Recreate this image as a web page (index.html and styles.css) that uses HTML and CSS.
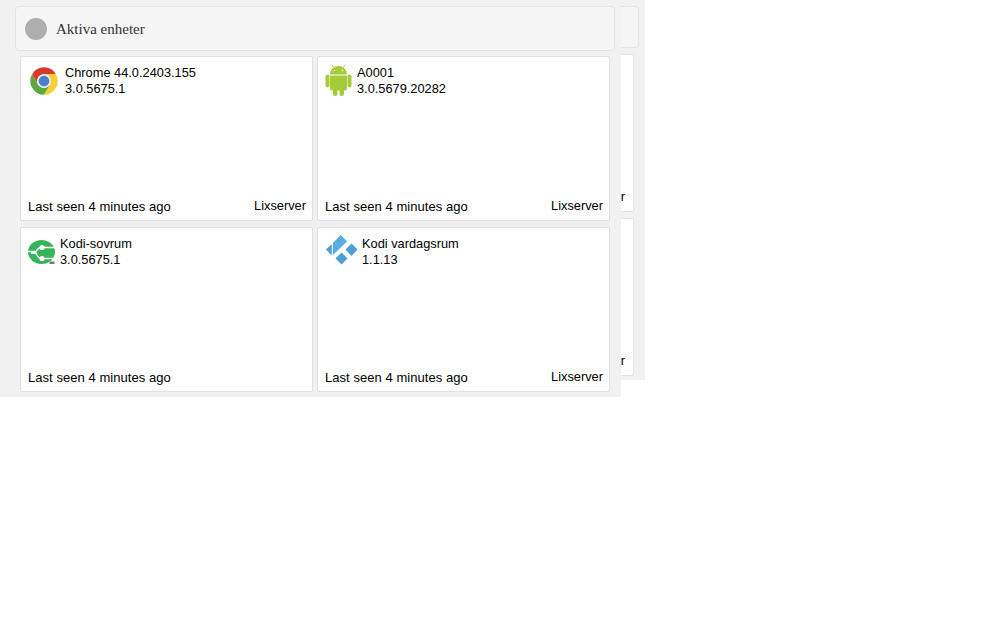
FILE: index.html
```html
<!DOCTYPE html>
<html lang="sv">
<head>
  <meta charset="UTF-8" />
  <title>Aktiva enheter</title>
  <link rel="stylesheet" href="styles.css">
</head>
<body>

  <!-- panel lying behind the front one -->
  <div class="panel-back">
    <div class="head-back"></div>
    <div class="grid-back">
      <div class="card-back"><span class="cut">r</span></div>
      <div class="card-back"><span class="cut">r</span></div>
    </div>
  </div>

  <div class="panel">
    <div class="head">
      <span class="head-dot"></span>
      <span class="head-title">Aktiva enheter</span>
    </div>

    <div class="grid">
      <div class="card">
        <div class="card-top">
          <svg class="icon icon-chrome" viewBox="0 0 48 48">
            <path fill="#d9382c" d="M4.95 13A22 22 0 0 1 43.05 13H24A11 11 0 0 0 14.5 29.5Z"/>
            <path fill="#f5cf33" d="M43.05 13A22 22 0 0 1 24 46L33.5 29.5A11 11 0 0 0 24 13Z"/>
            <path fill="#5aa83f" d="M24 46A22 22 0 0 1 4.95 13L14.5 29.5A11 11 0 0 0 33.5 29.5Z"/>
            <circle cx="24" cy="24" r="11" fill="#e8e8e8"/>
            <circle cx="24" cy="24" r="8.5" fill="#4a7fc9"/>
          </svg>
          <div class="info">
            <div>Chrome 44.0.2403.155</div>
            <div>3.0.5675.1</div>
          </div>
        </div>
        <div class="card-foot">
          <span class="seen">Last seen 4 minutes ago</span>
          <span class="server">Lixserver</span>
        </div>
      </div>

      <div class="card">
        <div class="card-top">
          <svg class="icon icon-android" viewBox="0 0 28 32">
            <g fill="#a4cb39">
              <path d="M5 10.5a8.5 8.5 0 0 1 17 0Z"/>
              <path d="M5 11.5h17v13a2 2 0 0 1-2 2H7a2 2 0 0 1-2-2Z"/>
              <rect x="0.5" y="10.5" width="4" height="13" rx="2"/>
              <rect x="22.5" y="10.5" width="4" height="13" rx="2"/>
              <rect x="8" y="22" width="4.5" height="10" rx="2.2"/>
              <rect x="14.5" y="22" width="4.5" height="10" rx="2.2"/>
            </g>
            <path d="M8.5 3.5L7 0.5M18.5 3.5L20 0.5" stroke="#a4cb39" stroke-width="0.8"/>
            <circle cx="9.5" cy="6.5" r="0.8" fill="#fff"/>
            <circle cx="17.5" cy="6.5" r="0.8" fill="#fff"/>
          </svg>
          <div class="info">
            <div>A0001</div>
            <div>3.0.5679.20282</div>
          </div>
        </div>
        <div class="card-foot">
          <span class="seen">Last seen 4 minutes ago</span>
          <span class="server">Lixserver</span>
        </div>
      </div>

      <div class="card">
        <div class="card-top">
          <svg class="icon icon-sync" viewBox="0 0 27 24">
            <ellipse cx="13.5" cy="12" rx="13.5" ry="12" fill="#36b558"/>
            <path d="M27 7.5H14Q10 7.5 8 11.5H0M27 18.5H14Q10 18.5 8 13H3" fill="none" stroke="#fff" stroke-width="1.5"/>
            <circle cx="14" cy="7.5" r="2.6" fill="#fff"/>
            <circle cx="14" cy="18.5" r="2.6" fill="#fff"/>
            <rect x="21.5" y="21.5" width="5" height="2.5" fill="#777"/>
          </svg>
          <div class="info">
            <div>Kodi-sovrum</div>
            <div>3.0.5675.1</div>
          </div>
        </div>
        <div class="card-foot">
          <span class="seen">Last seen 4 minutes ago</span>
        </div>
      </div>

      <div class="card">
        <div class="card-top">
          <svg class="icon icon-kodi" viewBox="0 0 32 30">
            <path fill="#58ade0" d="M15.7 0L22 6.5L8 20V8Z"/>
            <path fill="#4b9fd2" d="M1 14.5L6.8 9V20.5Z"/>
            <path fill="#4b9fd2" d="M26.5 8.5L32.5 14.5L26.5 21L20.5 14.5Z"/>
            <path fill="#4b9fd2" d="M16.5 17.5L22.5 23.5L16.5 29.5L10.5 23.5Z"/>
          </svg>
          <div class="info">
            <div>Kodi vardagsrum</div>
            <div>1.1.13</div>
          </div>
        </div>
        <div class="card-foot">
          <span class="seen">Last seen 4 minutes ago</span>
          <span class="server">Lixserver</span>
        </div>
      </div>
    </div>
  </div>

</body>
</html>
```

FILE: styles.css
```css
body {
  margin: 0;
  background: #fff;
  font-family: "Liberation Sans", Arial, sans-serif;
  font-size: 12.8px;
  color: #000;
}

/* back panel, sticks out on the right of the front one */
.panel-back {
  position: absolute;
  top: 0;
  left: 0;
  width: 645px;
  height: 380px;
  box-sizing: border-box;
  padding: 6px 6px 0 0;
  background: #f1f1f1;
}
.head-back {
  height: 42px;
  box-sizing: border-box;
  margin-left: 200px;
  background: #f5f5f5;
  border: 1px solid #e3e3e3;
  border-radius: 4px;
}
.grid-back {
  display: flex;
  flex-direction: column;
  gap: 6px;
  margin: 6px 5px 0 200px;
}
.card-back {
  height: 158px;
  box-sizing: border-box;
  background: #fff;
  border: 1px solid #e3e3e3;
  border-radius: 2px;
  display: flex;
  justify-content: flex-end;
  align-items: flex-end;
  padding: 0 8px 7px 0;
}

.panel {
  position: relative;
  width: 621px;
  height: 397px;
  box-sizing: border-box;
  padding: 6px 6px 0 15px;
  background: #f1f1f1;
}
.head {
  height: 45px;
  box-sizing: border-box;
  display: flex;
  align-items: center;
  gap: 9px;
  padding-left: 9px;
  background: #f5f5f5;
  border: 1px solid #e3e3e3;
  border-radius: 4px;
}
.head-dot {
  width: 22px;
  height: 22px;
  border-radius: 50%;
  background: #aeaeae;
}
.head-title {
  margin-top: 1px;
  font-family: "Liberation Serif", serif;
  font-size: 15px;
  color: #333;
}

.grid {
  display: grid;
  grid-template-columns: 293px 293px;
  grid-auto-rows: 165px;
  gap: 6px 4px;
  margin: 5px 0 0 5px;
}
.card {
  display: flex;
  flex-direction: column;
  justify-content: space-between;
  box-sizing: border-box;
  background: #fff;
  border: 1px solid #e0e0e0;
  border-radius: 2px;
  padding: 7px 6px 6px 7px;
}
.card-top {
  display: flex;
  align-items: flex-start;
}
.info {
  padding-top: 1px;
  line-height: 16px;
}
.icon {
  flex: none;
}
.icon-chrome {
  width: 30px;
  height: 30px;
  margin: 2px 6px 0 1px;
}
.icon-android {
  width: 28px;
  height: 32px;
  margin-right: 4px;
}
.icon-sync {
  width: 27px;
  height: 24px;
  margin: 5px 5px 0 0;
}
.icon-kodi {
  width: 32px;
  height: 30px;
  margin-right: 5px;
}

.card-foot {
  display: flex;
  justify-content: space-between;
  align-items: flex-end;
  line-height: 16px;
}
.seen {
  position: relative;
  top: 1px;
  font-size: 13px;
  letter-spacing: 0.05px;
}
```
